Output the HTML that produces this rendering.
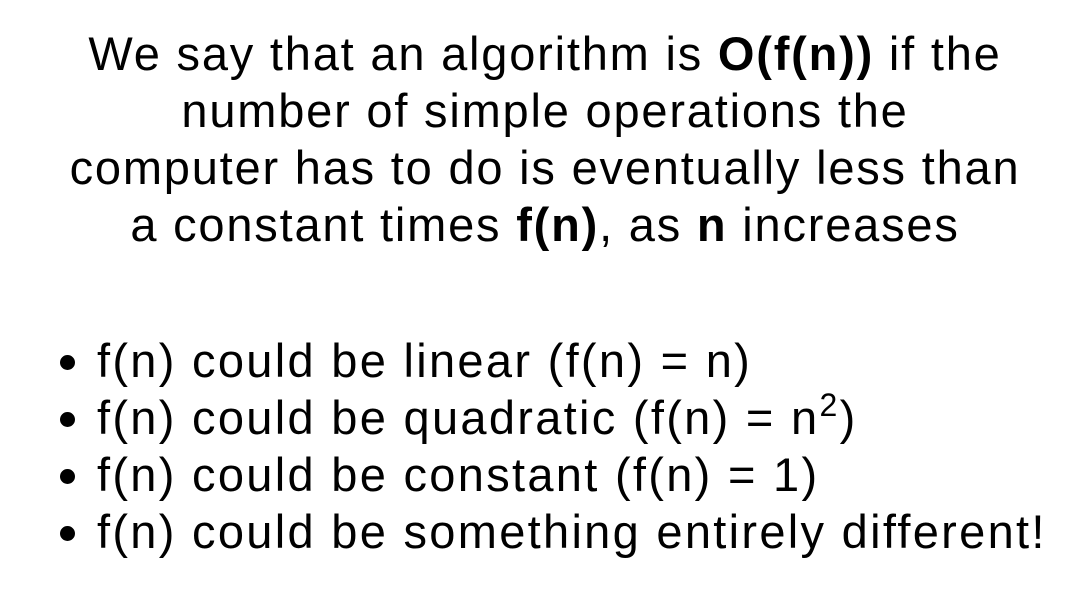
<!DOCTYPE html>
<html><head><meta charset="utf-8"><style>
html,body{margin:0;padding:0;background:#fff;}
body{width:1090px;height:594px;position:relative;overflow:hidden;font-family:"Liberation Sans",sans-serif;color:#000;}
.l{position:absolute;left:0;width:1090px;text-align:center;font-size:47px;line-height:57px;white-space:nowrap;letter-spacing:1.8px;}
.b{position:absolute;left:97px;font-size:47px;line-height:57px;white-space:nowrap;letter-spacing:2.3px;}
.d{position:absolute;left:60px;width:15px;height:15px;border-radius:50%;background:#000;}
sup{font-size:32px;vertical-align:18px;line-height:0;}
</style></head><body>
<div class="l" style="top:25px">We say that an algorithm is <b>O(f(n))</b> if the</div>
<div class="l" style="top:82px">number of simple operations the</div>
<div class="l" style="top:139px">computer has to do is eventually less than</div>
<div class="l" style="top:196px">a constant times <b>f(n)</b>, as <b>n</b> increases</div>
<div class="d" style="top:355px"></div><div class="b" style="top:332px">f(n) could be linear (f(n) = n)</div>
<div class="d" style="top:412px"></div><div class="b" style="top:389px">f(n) could be quadratic (f(n) = n<sup>2</sup>)</div>
<div class="d" style="top:469px"></div><div class="b" style="top:446px">f(n) could be constant (f(n) = 1)</div>
<div class="d" style="top:526px"></div><div class="b" style="top:503px">f(n) could be something entirely different!</div>
</body></html>
